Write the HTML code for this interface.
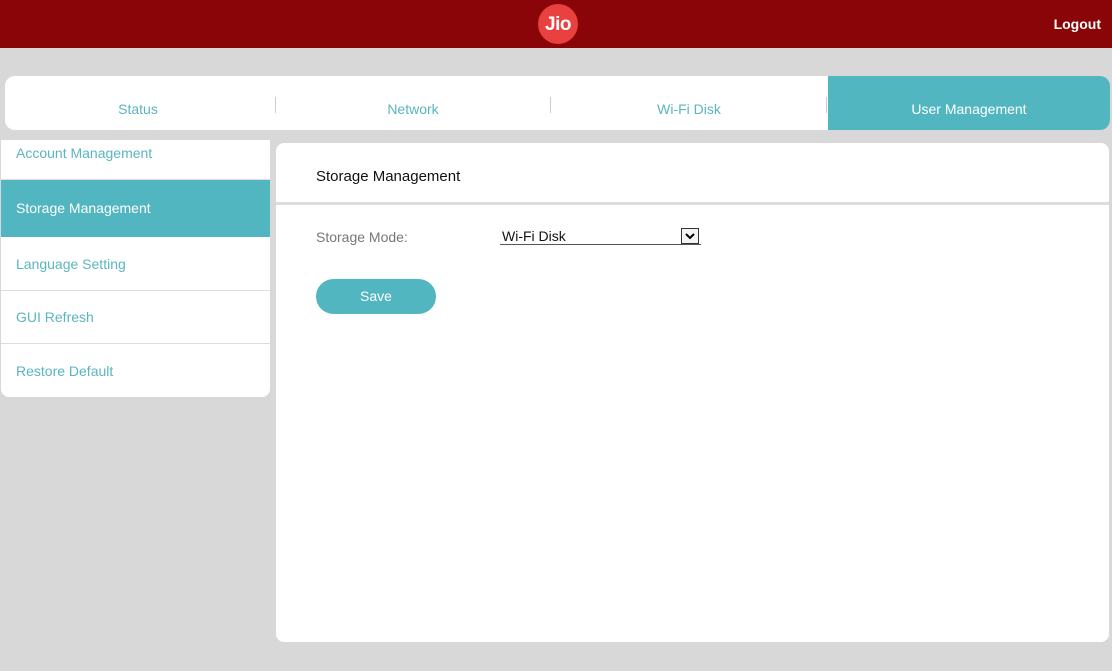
<!DOCTYPE html>
<html><head><style>
body{margin:0;width:1112px;height:671px;background:#d8d8d8;font-family:"Liberation Sans",sans-serif;position:relative;overflow:hidden}
.hdr{position:absolute;left:0;top:0;width:1112px;height:48px;background:#8a0507}
.logo{position:absolute;left:538px;top:4px;width:40px;height:40px;border-radius:50%;background:#e8413f;color:#fff;font-weight:bold;font-size:19px;text-align:center;line-height:42px;letter-spacing:-0.5px}
.logout{position:absolute;right:11px;top:16px;color:#fff;font-size:14px;font-weight:bold}
.tabs{position:absolute;left:5px;top:76px;width:1105px;height:54px;background:#fff;border-radius:10px;overflow:hidden}
.tab{position:absolute;top:0;height:54px;line-height:66px;text-align:center;color:#5ab5bf;font-size:14px}
.sep{position:absolute;top:21px;width:1px;height:16px;background:#ccc}
.side{position:absolute;left:1px;top:140px;width:269px;height:257px;background:#fff;border-radius:0 0 8px 8px;overflow:hidden}
.it{position:absolute;left:0;width:269px;color:#5ab5bf;font-size:14px;padding-left:15px;box-sizing:border-box;border-bottom:1px solid #ddd}
.main{position:absolute;left:276px;top:143px;width:833px;height:499px;background:#fff;border-radius:8px}
</style></head><body>
<div class="hdr"><div class="logo">Jio</div><div class="logout">Logout</div></div>
<div class="tabs">
<div class="tab" style="left:0;width:266px">Status</div>
<div class="sep" style="left:270px"></div>
<div class="tab" style="left:271px;width:274px">Network</div>
<div class="sep" style="left:545px"></div>
<div class="tab" style="left:546px;width:276px">Wi-Fi Disk</div>
<div class="sep" style="left:821px"></div>
<div class="tab" style="left:823px;width:282px;background:#52b6c1;color:#fff">User Management</div>
</div>
<div class="side">
<div class="it" style="top:0;height:40px;line-height:26px">Account Management</div>
<div class="it" style="top:40px;height:57px;line-height:56px;background:#52b6c1;color:#fff;border:none">Storage Management</div>
<div class="it" style="top:97px;height:54px;line-height:54px">Language Setting</div>
<div class="it" style="top:151px;height:53px;line-height:52px">GUI Refresh</div>
<div class="it" style="top:204px;height:53px;line-height:54px;border:none">Restore Default</div>
</div>
<div class="main">
<div style="position:absolute;left:40px;top:25px;font-size:15px;color:#111">Storage Management</div>
<div style="position:absolute;left:0;top:59px;width:833px;height:3px;background:#ddd"></div>
<div style="position:absolute;left:40px;top:86px;font-size:14px;color:#777">Storage Mode:</div>
<div style="position:absolute;left:224px;top:85px;width:199px;height:16px;border-bottom:1px solid #555;font-size:14px;color:#111;padding-left:2px">Wi-Fi Disk</div>
<div style="position:absolute;left:405px;top:85px;width:16px;height:14px;border:1px solid #333;background:#f4f4f4"><svg width="16" height="14"><path d="M4 5 L8 9 L12 5" stroke="#000" stroke-width="2" fill="none"/></svg></div>
<div style="position:absolute;left:40px;top:136px;width:120px;height:35px;border-radius:18px;background:#52b6c1;color:#fff;font-size:14px;text-align:center;line-height:35px">Save</div>
</div>
</body></html>
